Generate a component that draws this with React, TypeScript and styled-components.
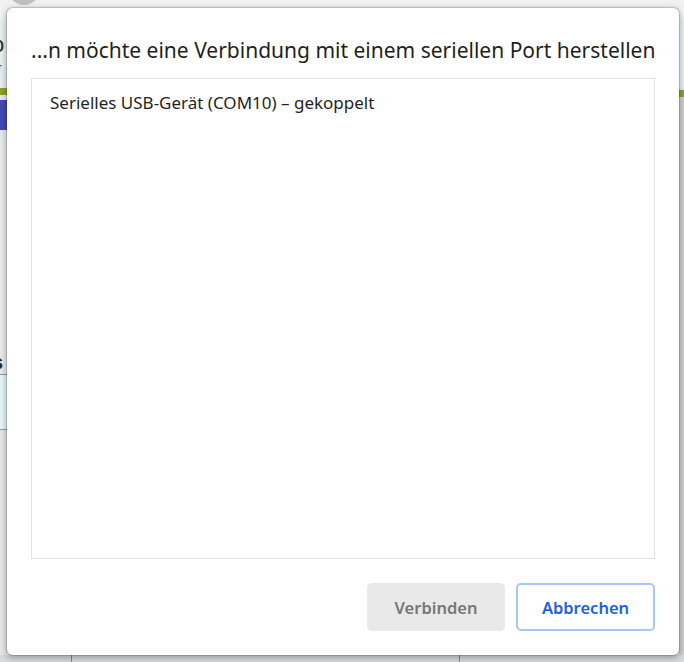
import React from 'react';
import styled, { createGlobalStyle } from 'styled-components';

const Global = createGlobalStyle`
  html, body {
    margin: 0;
    padding: 0;
    width: 684px;
    height: 662px;
    overflow: hidden;
    background: #f1f2f4;
  }
  body {
    font-family: "Noto Sans", "Open Sans", "Liberation Sans", sans-serif;
  }
  * { box-sizing: border-box; }
`;

const Screen = styled.div`
  position: relative;
  width: 684px;
  height: 662px;
  overflow: hidden;
  display: flex;
  flex-direction: column;
  background: #f1f2f4;
`;

const TabStrip = styled.div`
  height: 8px;
  flex: none;
  background: #f0f1f3;
  display: flex;
  align-items: flex-end;
  padding-left: 8px;
`;

const TabAvatar = styled.div`
  width: 32px;
  height: 32px;
  border-radius: 50%;
  background: #bdbec2;
  margin-bottom: 3px;
  flex: none;
`;

const PageArea = styled.div`
  flex: 1;
  display: grid;
  grid-template-columns: 7px 1fr 5px;
  background: #ebeded;
`;

const EdgeColumn = styled.div`
  display: flex;
  flex-direction: column;
  overflow: hidden;
  background: #e9ebeb;
`;

const Band = styled.div<{ $h: number; $bg: string }>`
  height: ${(p) => p.$h}px;
  flex: none;
  background: ${(p) => p.$bg};
  overflow: hidden;
  position: relative;
`;

const Glyph = styled.span<{ $size: number; $top: number; $weight?: number }>`
  display: block;
  font-family: "Liberation Sans", Arial, sans-serif;
  font-size: ${(p) => p.$size}px;
  font-weight: ${(p) => p.$weight ?? 400};
  line-height: 1;
  color: #2b2b2b;
  margin-top: ${(p) => p.$top}px;
  margin-left: -8px;
  white-space: nowrap;
`;

const Filler = styled.div<{ $bg: string }>`
  flex: 1;
  background: ${(p) => p.$bg};
`;

const Middle = styled.div`
  background: #ebeded;
`;

const BottomStrip = styled.div`
  height: 7px;
  flex: none;
  display: grid;
  grid-template-columns: 72px 388px 1fr;
  background: #d9dadb;
`;

const StripCell = styled.div`
  border-right: 1px solid #8a8a8a;
  &:last-child { border-right: none; }
`;

const Dialog = styled.div`
  position: absolute;
  left: 7px;
  top: 8px;
  width: 672px;
  height: 647px;
  background: #ffffff;
  border-radius: 6px;
  box-shadow: 0 0 0 1px rgba(0, 0, 0, 0.12), 0 2px 6px 1px rgba(0, 0, 0, 0.3);
  padding: 28px 24px 24px;
  display: flex;
  flex-direction: column;
`;

const Title = styled.h1`
  margin: 0 0 14px;
  font-size: 21px;
  line-height: 28px;
  font-weight: 400;
  color: #1f1f1f;
  white-space: nowrap;
`;

const PortList = styled.div`
  flex: 1;
  border: 1px solid #e1e1e1;
  display: flex;
  flex-direction: column;
`;

const PortItem = styled.div`
  padding: 12px 18px 10px;
  font-size: 17px;
  line-height: 24px;
  color: #1f1f1f;
`;

const Footer = styled.div`
  margin-top: 24px;
  display: flex;
  justify-content: flex-end;
  gap: 11px;
`;

const Button = styled.button<{ $primary?: boolean }>`
  height: 48px;
  width: ${(p) => (p.$primary ? 139 : 138)}px;
  border-radius: 5px;
  font-family: inherit;
  font-size: 16.5px;
  font-weight: 600;
  cursor: pointer;
  border: ${(p) => (p.$primary ? '2px solid #a8c7f7' : 'none')};
  background: ${(p) => (p.$primary ? '#ffffff' : '#e9e9e9')};
  color: ${(p) => (p.$primary ? '#1b62e6' : '#777777')};
`;

export default function App() {
  return (
    <>
      <Global />
      <Screen>
        <TabStrip>
          <TabAvatar />
        </TabStrip>
        <PageArea>
          <EdgeColumn>
            <Band $h={12} $bg="#f2f3f3" />
            <Band $h={68} $bg="#e7efef">
              <Glyph $size={22} $top={14}>o</Glyph>
              <Glyph $size={11} $top={6}>ar</Glyph>
            </Band>
            <Band $h={7} $bg="#8ca32a" />
            <Band $h={5} $bg="#e9ebeb" />
            <Band $h={30} $bg="#4648b6" />
            <Band $h={222} $bg="#e9ebeb" />
            <Band $h={22} $bg="#e9ebeb">
              <Glyph $size={20} $top={0} $weight={700}>s</Glyph>
            </Band>
            <Band $h={1} $bg="#9a9a9a" />
            <Band $h={54} $bg="#e5f4f4" />
            <Band $h={1} $bg="#9a9a9a" />
            <Filler $bg="#e6e7e8" />
          </EdgeColumn>
          <Middle />
          <EdgeColumn>
            <Band $h={12} $bg="#f2f3f3" />
            <Band $h={70} $bg="#e7f3f3" />
            <Band $h={7} $bg="#8ca32a" />
            <Filler $bg="#cfd0d0" />
          </EdgeColumn>
        </PageArea>
        <BottomStrip>
          <StripCell />
          <StripCell />
          <StripCell />
        </BottomStrip>
        <Dialog role="dialog" aria-label="Serieller Port">
          <Title>...n möchte eine Verbindung mit einem seriellen Port herstellen</Title>
          <PortList>
            <PortItem>Serielles USB-Gerät (COM10) – gekoppelt</PortItem>
          </PortList>
          <Footer>
            <Button>Verbinden</Button>
            <Button $primary>Abbrechen</Button>
          </Footer>
        </Dialog>
      </Screen>
    </>
  );
}
